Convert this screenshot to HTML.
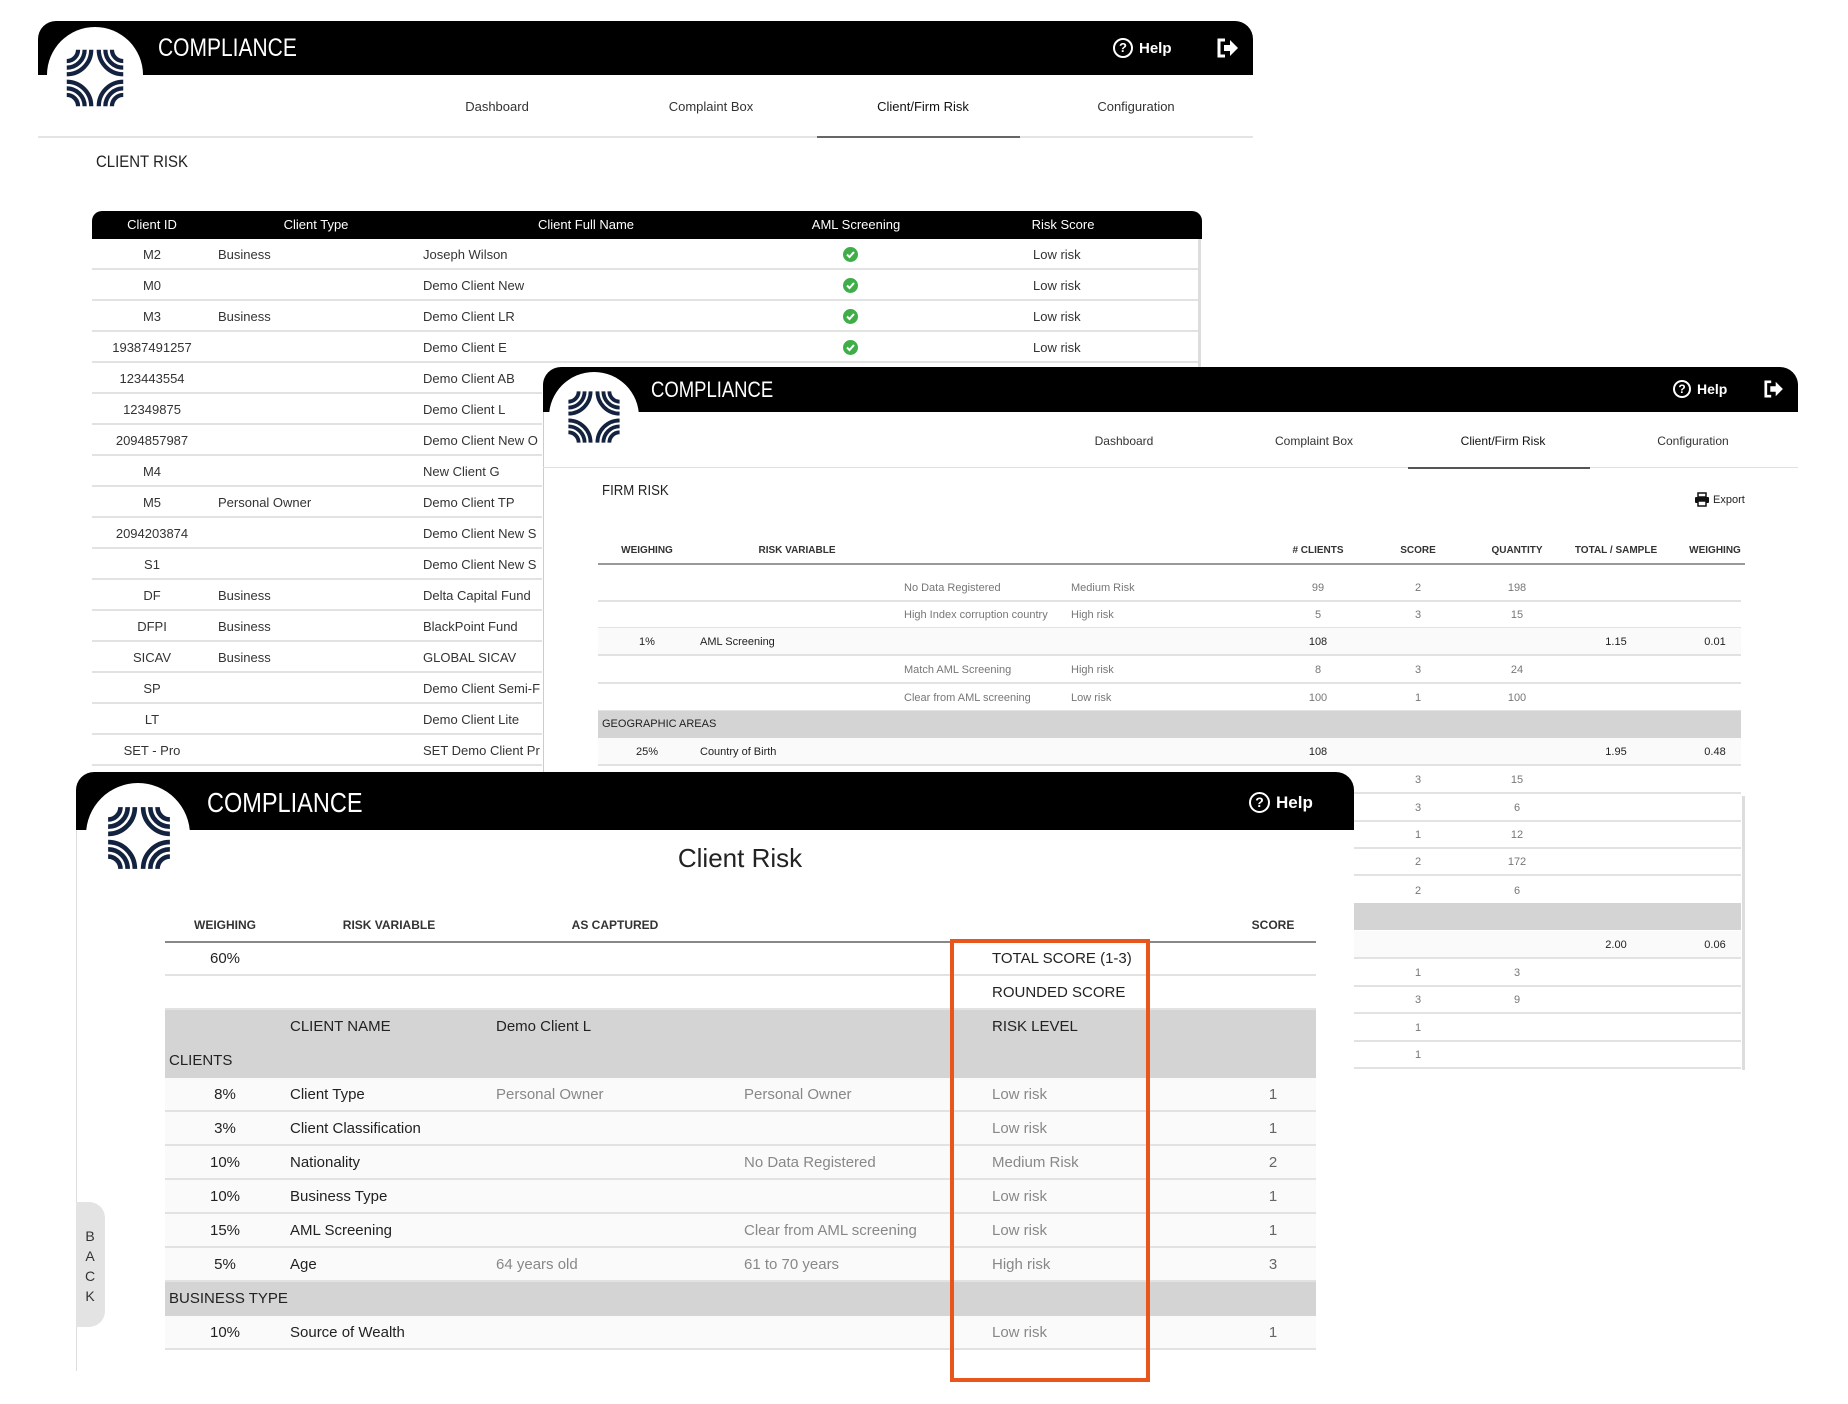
<!DOCTYPE html>
<html><head><meta charset="utf-8"><style>
*{margin:0;padding:0;box-sizing:border-box}
body{width:1848px;height:1404px;background:#fff;position:relative;overflow:hidden;font-family:"Liberation Sans Narrow","Liberation Sans",sans-serif;color:#333}
.a{position:absolute;white-space:nowrap}
.hdr{position:absolute;background:#000;border-radius:18px 18px 0 0}
.circ{position:absolute;background:#fff;border-radius:50%}
.ttl{position:absolute;color:#fff;font-family:"Liberation Sans Narrow","Liberation Sans",sans-serif;transform:scaleX(0.84);transform-origin:0 0}
.help{position:absolute;color:#fff;font-weight:bold;font-family:"Liberation Sans",sans-serif;display:flex;align-items:center;gap:6px}
.help i{display:inline-block;border:2px solid #fff;border-radius:50%;font-style:normal;text-align:center;font-weight:bold}
.c{transform:translateX(-50%)}
.row{position:absolute;border-bottom:2px solid #e2e2e2}
</style></head><body>

<svg width="0" height="0" style="position:absolute"><defs>
<g id="logo" fill="none" stroke="#13223f" stroke-width="4.5">
<path d="M12 0A12 12 0 0 1 0 12M19 0A19 19 0 0 1 0 19M26 0A26 26 0 0 1 0 26"/>
<path d="M48 0A12 12 0 0 0 60 12M41 0A19 19 0 0 0 60 19M34 0A26 26 0 0 0 60 26"/>
<path d="M12 60A12 12 0 0 0 0 48M19 60A19 19 0 0 0 0 41M26 60A26 26 0 0 0 0 34"/>
<path d="M48 60A12 12 0 0 1 60 48M41 60A19 19 0 0 1 60 41M34 60A26 26 0 0 1 60 34"/>
</g></defs></svg>

<!-- WINDOW 1 -->
<div class="hdr" style="left:38px;top:21px;width:1215px;height:54px"></div>
<div class="circ" style="left:47px;top:27px;width:96px;height:96px"></div>
<svg class="a" style="left:63px;top:46px" width="64" height="64" viewBox="-4 -4 68 68"><use href="#logo"/></svg>
<div class="ttl" style="left:158px;top:34px;font-size:25px">COMPLIANCE</div>
<div class="help" style="left:1113px;top:38px;font-size:15px"><i style="width:20px;height:20px;font-size:13px;line-height:16px">?</i>Help</div>
<svg class="a" style="left:1216px;top:38px" width="22" height="20" viewBox="0 0 22 20"><path d="M9 2H3v16h6" fill="none" stroke="#fff" stroke-width="3"/><path d="M8 7h6V2l8 8-8 8v-5H8z" fill="#fff"/></svg>
<div class="a c" style="left:497px;top:99px;font-size:13px">Dashboard</div>
<div class="a c" style="left:711px;top:99px;font-size:13px">Complaint Box</div>
<div class="a c" style="left:923px;top:99px;font-size:13px;color:#111">Client/Firm Risk</div>
<div class="a c" style="left:1136px;top:99px;font-size:13px">Configuration</div>
<div class="a" style="left:38px;top:136px;width:1215px;height:2px;background:#e4e4e4"></div>
<div class="a" style="left:817px;top:136px;width:203px;height:2px;background:#666"></div>
<div class="a" style="left:96px;top:152px;font-size:17px;color:#222;transform:scaleX(.88);transform-origin:0 0">CLIENT RISK</div>
<div class="a" style="left:92px;top:211px;width:1110px;height:28px;background:#000;border-radius:10px 10px 0 0"></div>
<div class="a c" style="left:152px;top:217px;font-size:13px;color:#fff">Client ID</div>
<div class="a c" style="left:316px;top:217px;font-size:13px;color:#fff">Client Type</div>
<div class="a c" style="left:586px;top:217px;font-size:13px;color:#fff">Client Full Name</div>
<div class="a c" style="left:856px;top:217px;font-size:13px;color:#fff">AML Screening</div>
<div class="a c" style="left:1063px;top:217px;font-size:13px;color:#fff">Risk Score</div>
<div class="a" style="left:1198px;top:239px;width:3px;height:130px;background:#ddd"></div>
<div id="t1"></div>

<!-- WINDOW 2 -->
<div class="a" style="left:543px;top:412px;width:1255px;height:660px;background:#fff;border-left:1px solid #ccc"></div>
<div class="hdr" style="left:543px;top:367px;width:1255px;height:45px"></div>
<div class="circ" style="left:549px;top:372px;width:90px;height:90px"></div>
<svg class="a" style="left:565px;top:388px" width="58" height="58" viewBox="-4 -4 68 68"><use href="#logo"/></svg>
<div class="ttl" style="left:651px;top:377px;font-size:22px">COMPLIANCE</div>
<div class="help" style="left:1673px;top:380px;font-size:14px"><i style="width:18px;height:18px;font-size:12px;line-height:14px">?</i>Help</div>
<svg class="a" style="left:1763px;top:380px" width="20" height="18" viewBox="0 0 22 20"><path d="M9 2H3v16h6" fill="none" stroke="#fff" stroke-width="3"/><path d="M8 7h6V2l8 8-8 8v-5H8z" fill="#fff"/></svg>
<div class="a c" style="left:1124px;top:434px;font-size:12px">Dashboard</div>
<div class="a c" style="left:1314px;top:434px;font-size:12px">Complaint Box</div>
<div class="a c" style="left:1503px;top:434px;font-size:12px;color:#111">Client/Firm Risk</div>
<div class="a c" style="left:1693px;top:434px;font-size:12px">Configuration</div>
<div class="a" style="left:543px;top:467px;width:1255px;height:1px;background:#e0e0e0"></div>
<div class="a" style="left:1408px;top:467px;width:182px;height:2px;background:#555"></div>
<div class="a" style="left:602px;top:482px;font-size:15px;color:#222;transform:scaleX(.88);transform-origin:0 0">FIRM RISK</div>
<svg class="a" style="left:1694px;top:492px" width="16" height="15" viewBox="0 0 16 15"><rect x="4" y="1" width="8" height="4" fill="none" stroke="#111" stroke-width="1.5"/><rect x="1" y="5" width="14" height="6" rx="1" fill="#111"/><rect x="4" y="9" width="8" height="5" fill="#fff" stroke="#111" stroke-width="1.5"/></svg>
<div class="a" style="left:1713px;top:494px;font-size:11px;color:#222">Export</div>
<div class="a c" style="left:647px;top:545px;font-size:10px;font-weight:bold">WEIGHING</div>
<div class="a c" style="left:797px;top:545px;font-size:10px;font-weight:bold">RISK VARIABLE</div>
<div class="a c" style="left:1318px;top:545px;font-size:10px;font-weight:bold"># CLIENTS</div>
<div class="a c" style="left:1418px;top:545px;font-size:10px;font-weight:bold">SCORE</div>
<div class="a c" style="left:1517px;top:545px;font-size:10px;font-weight:bold">QUANTITY</div>
<div class="a c" style="left:1616px;top:545px;font-size:10px;font-weight:bold">TOTAL / SAMPLE</div>
<div class="a c" style="left:1715px;top:545px;font-size:10px;font-weight:bold">WEIGHING</div>
<div class="a" style="left:598px;top:563px;width:1147px;height:2px;background:#999"></div>
<div class="a" style="left:1742px;top:796px;width:3px;height:274px;background:#ddd"></div>
<div id="t2"></div>

<!-- WINDOW 3 -->
<div class="a" style="left:76px;top:830px;width:1278px;height:541px;background:#fff;border-left:1px solid #ddd"></div>
<div class="hdr" style="left:76px;top:772px;width:1278px;height:58px"></div>
<div class="circ" style="left:86px;top:783px;width:104px;height:104px"></div>
<svg class="a" style="left:104px;top:803px" width="70" height="70" viewBox="-4 -4 68 68"><use href="#logo"/></svg>
<div class="ttl" style="left:207px;top:787px;font-size:28px">COMPLIANCE</div>
<div class="help" style="left:1249px;top:792px;font-size:17px"><i style="width:21px;height:21px;font-size:14px;line-height:17px">?</i>Help</div>
<div class="a c" style="left:740px;top:843px;font-size:26px;color:#222">Client Risk</div>
<div class="a" style="left:76px;top:1202px;width:29px;height:125px;background:#e3e3e3;border-radius:0 16px 16px 0"></div>
<div class="a" style="left:84px;top:1226px;font-size:14px;line-height:20px;width:12px;text-align:center;white-space:normal">B A C K</div>
<div class="a c" style="left:225px;top:918px;font-size:12px;font-weight:bold">WEIGHING</div>
<div class="a c" style="left:389px;top:918px;font-size:12px;font-weight:bold">RISK VARIABLE</div>
<div class="a c" style="left:615px;top:918px;font-size:12px;font-weight:bold">AS CAPTURED</div>
<div class="a c" style="left:1273px;top:918px;font-size:12px;font-weight:bold">SCORE</div>
<div class="a" style="left:165px;top:941px;width:1151px;height:2px;background:#888"></div>
<div id="t3"></div>
<div class="a" style="left:950px;top:939px;width:200px;height:443px;border:4px solid #e8561e"></div>

<script>
function h(id,s){document.getElementById(id).innerHTML=s}
var r1=[["M2","Business","Joseph Wilson",1],["M0","","Demo Client New",1],["M3","Business","Demo Client LR",1],["19387491257","","Demo Client E",1],["123443554","","Demo Client AB"],["12349875","","Demo Client L"],["2094857987","","Demo Client New O"],["M4","","New Client G"],["M5","Personal Owner","Demo Client TP"],["2094203874","","Demo Client New S"],["S1","","Demo Client New S"],["DF","Business","Delta Capital Fund"],["DFPI","Business","BlackPoint Fund"],["SICAV","Business","GLOBAL SICAV"],["SP","","Demo Client Semi-F"],["LT","","Demo Client Lite"],["SET - Pro","","SET Demo Client Pr"]];
var s="";r1.forEach(function(r,i){var t=239+31*i;var w=r[3]?1106:450;
s+='<div class="row" style="left:92px;top:'+t+'px;width:'+w+'px;height:31px"></div>';
s+='<div class="a c" style="left:152px;top:'+(t+8)+'px;font-size:13px">'+r[0]+'</div>';
s+='<div class="a" style="left:218px;top:'+(t+8)+'px;font-size:13px">'+r[1]+'</div>';
s+='<div class="a" style="left:423px;top:'+(t+8)+'px;font-size:13px;width:119px;overflow:hidden">'+r[2]+'</div>';
if(r[3]){s+='<svg class="a" style="left:843px;top:'+(t+8)+'px" width="15" height="15"><circle cx="7.5" cy="7.5" r="7.5" fill="#3fae49"/><path d="M4 7.5l2.5 2.5 4.5-5" stroke="#fff" stroke-width="2" fill="none"/></svg>';
s+='<div class="a" style="left:1033px;top:'+(t+8)+'px;font-size:13px">Low risk</div>';}
});h("t1",s);
var r2=[[588,"","","No Data Registered","Medium Risk","99","2","198","",""],[615,"","","High Index corruption country","High risk","5","3","15","",""],[642,"1%","AML Screening","","","108","","","1.15","0.01",1],[670,"","","Match AML Screening","High risk","8","3","24","",""],[698,"","","Clear from AML screening","Low risk","100","1","100","",""],[725,"G"],[752,"25%","Country of Birth","","","108","","","1.95","0.48",1],[780,"","","","","","3","15","",""],[808,"","","","","","3","6","",""],[835,"","","","","","1","12","",""],[862,"","","","","","2","172","",""],[891,"","","","","","2","6","",""],[917,"B"],[945,"","","","","","","","2.00","0.06",1],[973,"","","","","","1","3","",""],[1000,"","","","","","3","9","",""],[1028,"","","","","","1","","",""],[1055,"","","","","","1","","",""]];
s="";r2.forEach(function(r){var t=r[0]-14;
if(r[1]=="G"||r[1]=="B"){s+='<div class="a" style="left:598px;top:'+t+'px;width:1143px;height:27px;background:#d4d4d4"></div>';if(r[1]=="G")s+='<div class="a" style="left:602px;top:'+(t+7)+'px;font-size:11px;color:#222">GEOGRAPHIC AREAS</div>';return}
s+='<div class="row" style="left:598px;top:'+t+'px;width:1143px;height:28px;'+(r[10]?'background:#fafafa;':'')+'"></div>';
var f='font-size:11px;top:'+(t+8)+'px;'+(r[10]?'color:#222;':'color:#777;');
s+='<div class="a c" style="left:647px;'+f+'">'+r[1]+'</div><div class="a" style="left:700px;'+f+'">'+r[2]+'</div><div class="a" style="left:904px;'+f+'">'+r[3]+'</div><div class="a" style="left:1071px;'+f+'">'+r[4]+'</div>';
[[1318,5],[1418,6],[1517,7],[1616,8],[1715,9]].forEach(function(c){s+='<div class="a c" style="left:'+c[0]+'px;'+f+'">'+r[c[1]]+'</div>'});
});h("t2",s);
var r3=[["60%","","","","TOTAL SCORE (1-3)","",0],["","","","","ROUNDED SCORE","",0],["","CLIENT NAME","Demo Client L","","RISK LEVEL","",2],["CLIENTS","","","","","",3],["8%","Client Type","Personal Owner","Personal Owner","Low risk","1",1],["3%","Client Classification","","","Low risk","1",1],["10%","Nationality","","No Data Registered","Medium Risk","2",1],["10%","Business Type","","","Low risk","1",1],["15%","AML Screening","","Clear from AML screening","Low risk","1",1],["5%","Age","64 years old","61 to 70 years","High risk","3",1],["BUSINESS TYPE","","","","","",3],["10%","Source of Wealth","","","Low risk","1",1]];
s="";r3.forEach(function(r,i){var t=942+34*i;var g=r[6]>=2;
s+='<div class="row" style="left:165px;top:'+t+'px;width:1151px;height:34px;'+(g?'background:#d4d4d4;border-color:#d4d4d4;':(r[6]==1?'background:#fafafa;':''))+'"></div>';
var y='top:'+(t+8)+'px;font-size:15px;';var dim=r[6]==1?'color:#888;':'color:#222;';
if(r[6]==3){s+='<div class="a" style="left:169px;'+y+'color:#222">'+r[0]+'</div>';return}
s+='<div class="a c" style="left:225px;'+y+'color:#222">'+r[0]+'</div><div class="a" style="left:290px;'+y+'color:#222">'+r[1]+'</div><div class="a" style="left:496px;'+y+dim+'">'+r[2]+'</div><div class="a" style="left:744px;'+y+dim+'">'+r[3]+'</div><div class="a" style="left:992px;'+y+(r[6]==1?'color:#888':'color:#222')+'">'+r[4]+'</div><div class="a c" style="left:1273px;'+y+'color:#666">'+r[5]+'</div>';
});h("t3",s);
</script>
</body></html>
